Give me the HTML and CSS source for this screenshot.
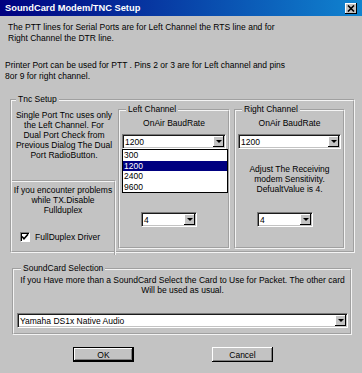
FILE: index.html
```html
<!DOCTYPE html>
<html lang="en">
<head>
    <meta charset="UTF-8">
    <title>SoundCard Modem/TNC Setup</title>
    <link rel="stylesheet" href="styles.css">
</head>
<body>
    <div class="window">
        <div class="titlebar">
            <span class="title">SoundCard Modem/TNC Setup</span>
            <span class="close-btn">
                <svg width="8" height="7" viewBox="0 0 8 7"><path d="M1 0.5 L7 6.5 M7 0.5 L1 6.5" stroke="#000" stroke-width="1.6"/></svg>
            </span>
        </div>

        <p class="intro intro-ptt">The PTT lines for Serial Ports are for Left Channel the RTS line and for<br>Right Channel the DTR line.</p>
        <p class="intro intro-printer">Printer Port can be used for PTT . Pins 2 or 3 are for Left channel and pins<br>8or 9 for right channel.</p>

        <!-- Tnc setup -->
        <fieldset class="group tnc">
            <legend>Tnc Setup</legend>
            <div class="tnc-row">
                <div class="tnc-info">
                    <p class="note single-note">Single Port Tnc uses only<br>the Left Channel. For<br>Dual Port Check from<br>Previous Dialog The Dual<br>Port RadioButton.</p>
                    <div class="duplex-panel">
                        <p class="note">If you encounter problems<br>while TX.Disable<br>Fullduplex</p>
                        <div class="check">
                            <span class="check-box">
                                <svg width="8" height="8" viewBox="0 0 8 8"><path d="M1 3.5 L3 5.8 L7 1.2" fill="none" stroke="#000" stroke-width="1.6"/></svg>
                            </span>
                            FullDuplex Driver
                        </div>
                    </div>
                </div>

                <fieldset class="group channel channel-left">
                    <legend>Left Channel</legend>
                    <div class="channel-title">OnAir BaudRate</div>
                    <div class="combo-wrap">
                        <div class="combo"><span class="combo-value">1200</span><span class="combo-btn"></span></div>
                        <ul class="drop-list">
                            <li>300</li>
                            <li class="selected">1200</li>
                            <li>2400</li>
                            <li>9600</li>
                        </ul>
                    </div>
                    <p class="note channel-note">Adjust The Receiving<br>modem Sensitivity.<br>DefualtValue is 4.</p>
                    <div class="combo combo-small"><span class="combo-value">4</span><span class="combo-btn"></span></div>
                </fieldset>

                <fieldset class="group channel channel-right">
                    <legend>Right Channel</legend>
                    <div class="channel-title">OnAir BaudRate</div>
                    <div class="combo-wrap">
                        <div class="combo"><span class="combo-value">1200</span><span class="combo-btn"></span></div>
                    </div>
                    <p class="note channel-note">Adjust The Receiving<br>modem Sensitivity.<br>DefualtValue is 4.</p>
                    <div class="combo combo-small"><span class="combo-value">4</span><span class="combo-btn"></span></div>
                </fieldset>
            </div>
        </fieldset>

        <!-- SoundCard -->
        <fieldset class="group soundcard">
            <legend>SoundCard Selection</legend>
            <p class="note soundcard-note">If you Have more than a SoundCard Select the Card to Use for Packet. The other card<br>Will be used as usual.</p>
            <div class="combo"><span class="combo-value">Yamaha DS1x Native Audio</span><span class="combo-btn"></span></div>
        </fieldset>

        <div class="buttons">
            <div class="btn btn-default">OK</div>
            <div class="btn">Cancel</div>
        </div>
    </div>
</body>
</html>
```

FILE: styles.css
```css
body {
    margin: 0;
    background-color: #c3c3c3;
}
.window {
    width: 362px;
    height: 373px;
    overflow: hidden;
    background-color: #c3c3c3;
    font-family: "Liberation Sans", Arial, sans-serif;
    font-size: 8.5px;
    color: #000;
}
.titlebar {
    height: 16px;
    display: flex;
    align-items: center;
    justify-content: space-between;
    padding: 0 5px;
    background: linear-gradient(to right, #000080, #1084d0);
}
.title {
    color: white;
    font-weight: bold;
    font-size: 9.3px;
}
.close-btn {
    width: 12px;
    height: 11px;
    display: flex;
    align-items: center;
    justify-content: center;
    background-color: #c3c3c3;
    box-shadow: inset -1px -1px #000, inset 1px 1px #fff;
}
p {
    margin: 0;
}
.intro {
    line-height: 11px;
    white-space: nowrap;
}
.intro-ptt {
    margin: 6px 0 0 8px;
}
.intro-printer {
    margin: 16px 0 0 5px;
}
.group {
    margin: 0;
    padding: 0;
    border: 2px groove #f4f4f4;
    box-sizing: border-box;
    min-width: 0;
}
.group legend {
    margin-left: 4px;
    padding: 0 2px;
    line-height: 11px;
}
.note {
    line-height: 10px;
    text-align: center;
    white-space: nowrap;
}
.tnc {
    margin: 12px 0 0 10px;
    width: 345px;
    height: 159px;
}
.tnc-row {
    display: flex;
}
.tnc-info {
    width: 104px;
    display: flex;
    flex-direction: column;
}
.single-note {
    margin-top: 5px;
}
.duplex-panel {
    margin-top: 20px;
    height: 70px;
    border-top: 2px groove #f4f4f4;
    border-right: 2px groove #f4f4f4;
    padding-top: 3px;
}
.check {
    display: flex;
    align-items: center;
    gap: 5px;
    margin: 17px 0 0 8px;
}
.check-box {
    width: 10px;
    height: 10px;
    box-sizing: border-box;
    display: flex;
    align-items: center;
    justify-content: center;
    background-color: white;
    border: 1px solid;
    border-color: #808080 #fff #fff #808080;
    box-shadow: inset 1px 1px #000;
}
.channel {
    margin-top: -1px;
    height: 145px;
    padding: 0 2px;
}
.channel-left {
    margin-left: 2px;
    width: 112px;
}
.channel-right {
    margin-left: 4px;
    width: 111px;
}
.channel-title {
    margin-top: 3px;
    line-height: 10px;
    text-align: center;
}
.combo-wrap {
    position: relative;
    margin-top: 6px;
}
.combo {
    height: 15px;
    box-sizing: border-box;
    display: flex;
    align-items: center;
    justify-content: space-between;
    background-color: white;
    border: 1px solid;
    border-color: #7a7a7a #fff #fff #7a7a7a;
    box-shadow: inset 1px 1px #1a1a1a, inset -1px -1px #c3c3c3;
}
.combo-value {
    padding-left: 2px;
}
.combo-btn {
    width: 11px;
    height: 11px;
    margin-right: 1px;
    box-sizing: border-box;
    display: flex;
    align-items: center;
    justify-content: center;
    background-color: #c3c3c3;
    box-shadow: inset -1px -1px #000, inset 1px 1px #fff;
}
.combo-btn::after {
    content: "";
    border-left: 3px solid transparent;
    border-right: 3px solid transparent;
    border-top: 3px solid #000;
}
.drop-list {
    position: absolute;
    top: 100%;
    left: 0;
    width: 104px;
    margin: 0;
    padding: 0;
    list-style: none;
    background-color: white;
    border: 1px solid #000;
    z-index: 2;
}
.drop-list li {
    height: 10.5px;
    line-height: 10.5px;
    padding-left: 1px;
}
.drop-list .selected {
    background-color: #000080;
    color: white;
}
.channel-note {
    margin-top: 15px;
}
.combo-small {
    width: 56px;
    margin: 18px 0 0 19px;
}
.soundcard {
    margin: 10px 0 0 12px;
    width: 340px;
    padding: 0 2px 5px 3px;
}
.soundcard-note {
    margin-top: 1px;
}
.soundcard .combo {
    margin-top: 18px;
}
.buttons {
    display: flex;
    gap: 78px;
    margin-top: 12px;
    padding-left: 73px;
}
.btn {
    width: 61px;
    height: 15px;
    box-sizing: border-box;
    display: flex;
    align-items: center;
    justify-content: center;
    box-shadow: inset -1px -1px #000, inset 1px 1px #fff, inset -2px -2px #808080;
}
.btn-default {
    border: 1px solid #000;
}
```
